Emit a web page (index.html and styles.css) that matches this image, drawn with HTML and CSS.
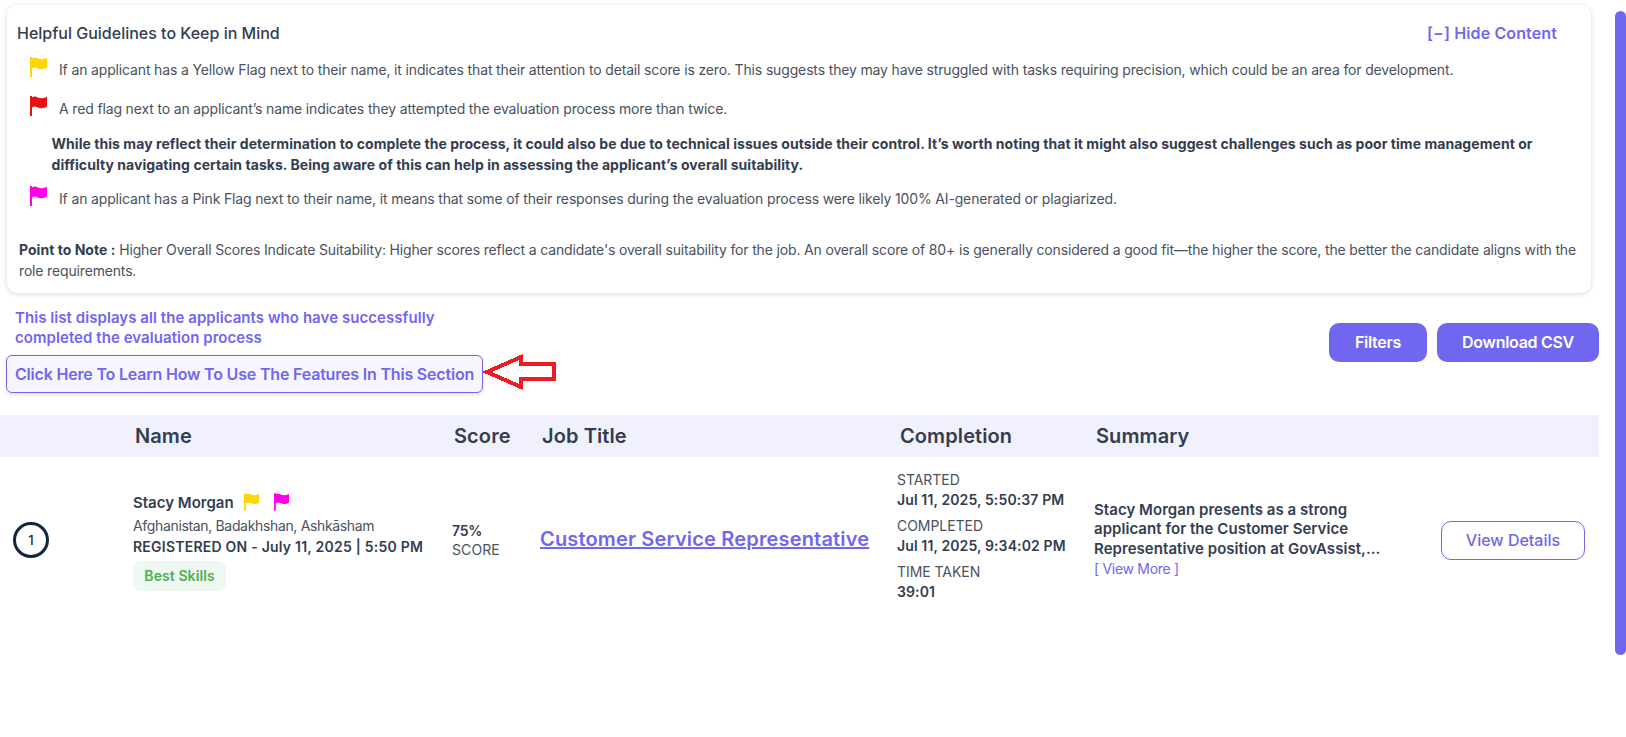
FILE: index.html
```html
<!DOCTYPE html>
<html lang="en">
<head>
<meta charset="utf-8">
<title>Applicants</title>
<link rel="stylesheet" href="styles.css">
</head>
<body>
<svg class="defs" width="0" height="0" aria-hidden="true">
  <symbol id="flag" viewBox="0 0 17 20">
    <path d="M0 0H2V1.2C4 .2 6 .6 8 1.6 10.500 2.800 13.500 2.400 17 .8V10.600C14 12.600 10.500 12.800 8 11.400 6 10.400 4 10.200 2 11.200V20H0Z"/>
  </symbol>
</svg>
<main class="page">
  <section class="card">
    <div class="card-head">
      <h2 class="card-title">Helpful Guidelines to Keep in Mind</h2>
      <a class="hide-link">[−] Hide Content</a>
    </div>
    <div class="flag-row flag-row-first">
      <svg class="flag flag-lg yellow"><use href="#flag"/></svg>
      <p>If an applicant has a Yellow Flag next to their name, it indicates that their attention to detail score is zero. This suggests they may have struggled with tasks requiring precision, which could be an area for development.</p>
    </div>
    <div class="flag-row">
      <svg class="flag flag-lg red"><use href="#flag"/></svg>
      <p>A red flag next to an applicant’s name indicates they attempted the evaluation process more than twice.</p>
    </div>
    <p class="bold-note">While this may reflect their determination to complete the process, it could also be due to technical issues outside their control. It’s worth noting that it might also suggest challenges such as poor time management or difficulty navigating certain tasks. Being aware of this can help in assessing the applicant’s overall suitability.</p>
    <div class="flag-row flag-row-last">
      <svg class="flag flag-lg pink"><use href="#flag"/></svg>
      <p>If an applicant has a Pink Flag next to their name, it means that some of their responses during the evaluation process were likely 100% AI-generated or plagiarized.</p>
    </div>
    <p class="note"><strong>Point to Note :</strong> Higher Overall Scores Indicate Suitability: Higher scores reflect a candidate's overall suitability for the job. An overall score of 80+ is generally considered a good fit—the higher the score, the better the candidate aligns with the role requirements.</p>
  </section>

  <section class="toolbar">
    <div class="intro">
      <p class="intro-text">This list displays all the applicants who have successfully completed the evaluation process</p>
      <div class="learn-row">
        <a class="learn-btn">Click Here To Learn How To Use The Features In This Section</a>
        <svg class="arrow" width="74" height="36" viewBox="0 0 74 36" shape-rendering="crispEdges"><path d="M4 18 38 3V10H71V25H38V33Z" fill="#fff" stroke="#ed1c24" stroke-width="4"/></svg>
      </div>
    </div>
    <div class="actions">
      <button class="btn btn-filters">Filters</button>
      <button class="btn btn-csv">Download CSV</button>
    </div>
  </section>

  <section class="table">
    <div class="thead">
      <span></span><span>Name</span><span>Score</span><span>Job Title</span><span>Completion</span><span>Summary</span><span></span>
    </div>
    <div class="trow">
      <div class="rank-cell"><span class="rank">1</span></div>
      <div class="person">
        <div class="person-name">Stacy Morgan
          <svg class="flag flag-sm flag-first yellow"><use href="#flag"/></svg>
          <svg class="flag flag-sm pink"><use href="#flag"/></svg>
        </div>
        <div class="person-loc">Afghanistan, Badakhshan, Ashkāsham</div>
        <div class="person-reg">REGISTERED ON - July 11, 2025 | 5:50 PM</div>
        <span class="chip">Best Skills</span>
      </div>
      <div class="score"><strong>75%</strong><span>SCORE</span></div>
      <div class="job-cell"><a class="job-link">Customer Service Representative</a></div>
      <div class="completion">
        <span>STARTED</span><strong>Jul 11, 2025, 5:50:37 PM</strong>
        <span>COMPLETED</span><strong>Jul 11, 2025, 9:34:02 PM</strong>
        <span>TIME TAKEN</span><strong>39:01</strong>
      </div>
      <div class="summary">
        <p>Stacy Morgan presents as a strong applicant for the Customer Service Representative position at GovAssist,...</p>
        <a class="view-more">[ View More ]</a>
      </div>
      <div class="detail-cell"><button class="btn-outline">View Details</button></div>
    </div>
  </section>
</main>
<div class="scroll-thumb"></div>
</body>
</html>
```

FILE: styles.css
```css
* { box-sizing: border-box; }
html, body { margin: 0; padding: 0; height: 100%; overflow: hidden; background: #fff; }
body { font-family: Inter, "Noto Sans", sans-serif; color: #333d50; }
p, h2 { margin: 0; }
.defs { position: absolute; }
.page { width: 1599px; padding-top: 5px; }

.card {
  margin-left: 7px; width: 1584px; height: 288px;
  padding: 17px 10px 0 10px;
  background: #fff; border-radius: 10px;
  box-shadow: 0 1px 5px rgba(30, 40, 60, .18);
}
.card-head { display: flex; justify-content: space-between; align-items: center; height: 22px; padding-right: 24px; }
.card-title { font-size: 16px; font-weight: 500; color: #333d50; letter-spacing: 0; }
.hide-link { font-size: 16px; font-weight: 600; color: #7166f0; letter-spacing: .12px; }

.flag-row { display: flex; align-items: center; gap: 12px; padding-left: 13px; height: 20px; margin-top: 19px; font-size: 14px; color: #4a5160; letter-spacing: -.15px; }
.flag-row p { padding-top: 4px; }
.flag-row-first { margin-top: 13px; }
.flag-row-last { margin-top: 11.500px; }
.flag { display: block; flex: none; }
.flag-lg { width: 17px; height: 20px; }
.flag-sm { display: inline-block; width: 15px; height: 18px; margin-left: 11px; vertical-align: -3px; }
.flag-first { margin-left: 7px; }
.yellow { fill: #ffd600; }
.red { fill: #e81010; }
.pink { fill: #ff00e6; }
.bold-note { margin: 16.500px 30px 0 34.5px; font-size: 14px; line-height: 21px; font-weight: 700; color: #333d50; letter-spacing: .05px; }
.note { margin: 32.500px 0 0 2px; font-size: 14px; line-height: 21px; color: #4a5160; letter-spacing: -.16px; }
.note strong { font-weight: 700; color: #333d50; letter-spacing: .03px; }

.toolbar { display: flex; justify-content: space-between; align-items: flex-start; margin-top: 15px; }
.intro { padding-left: 6px; }
.intro-text { width: 440px; padding-left: 9px; font-size: 15px; line-height: 20px; font-weight: 600; color: #7166f0; letter-spacing: .06px; }
.learn-row { display: flex; align-items: flex-start; margin-top: 7px; }
.learn-btn {
  display: block; height: 38px; width: 477px; padding-left: 8px; line-height: 36px;
  background: #f7f6ff; border: 1px solid #7166f0; border-radius: 6px;
  font-size: 16px; font-weight: 600; color: #7166f0; letter-spacing: -.19px; white-space: nowrap;
  box-shadow: 0 2px 4px rgba(60, 60, 120, .15);
}
.arrow { display: block; margin-top: -1px; }
.actions { display: flex; gap: 10px; margin-top: 15px; }
.btn { height: 39px; padding: 0 0 2px; border: 0; border-radius: 10px; background: #7166f0; color: #fff; font: 600 16px Inter, sans-serif; letter-spacing: -.3px; }
.btn-filters { width: 98px; }
.btn-csv { width: 162px; }

.table { margin-top: 22px; }
.thead, .trow { display: grid; grid-template-columns: 133px 319px 88px 358px 196px 296px 209px; }
.thead { height: 42px; align-items: center; background: #f1f1fd; font-size: 20px; font-weight: 600; color: #333d50; letter-spacing: .1px; }
.thead span { padding-left: 2px; }
.trow { height: 168px; align-items: center; }
.rank-cell { padding-left: 13px; margin-bottom: 2px; }
.rank { display: flex; align-items: center; justify-content: center; width: 36px; height: 36px; border: 3px solid #10263f; border-radius: 50%; font-size: 13px; font-weight: 500; color: #10263f; }
.person { font-size: 14px; }
.person-name { font-size: 15px; line-height: 22px; margin-bottom: 1px; font-weight: 600; letter-spacing: 0; }
.person-loc { line-height: 22px; color: #4a5160; letter-spacing: -.34px; }
.person-reg { line-height: 20px; font-weight: 600; letter-spacing: .23px; }
.chip { display: inline-block; margin-top: 4px; width: 93px; height: 30px; line-height: 30px; text-align: center; background: #eff8f0; border-radius: 8px; color: #4caf50; font-weight: 600; font-size: 14px; letter-spacing: .08px; }
.score { display: flex; flex-direction: column; margin-bottom: 2px; font-size: 14px; line-height: 19px; color: #4a5160; letter-spacing: .1px; }
.score strong { font-weight: 600; color: #333d50; letter-spacing: -.2px; }
.job-cell { margin-bottom: 4px; }
.job-link { font-size: 20px; font-weight: 600; color: #7166f0; text-decoration: underline; letter-spacing: .17px; white-space: nowrap; }
.completion { display: flex; flex-direction: column; margin: 0 0 10px -1px; font-size: 14px; line-height: 20px; color: #4a5160; letter-spacing: -.05px; }
.completion strong { margin-bottom: 6px; font-weight: 600; color: #333d50; letter-spacing: .12px; }
.completion strong:last-child { margin-bottom: 0; }
.summary { margin-bottom: 4px; font-size: 15px; line-height: 19.500px; font-weight: 600; letter-spacing: .05px; }
.view-more { display: block; margin-top: 1px; font-size: 14px; font-weight: 400; color: #7166f0; letter-spacing: -.3px; }
.detail-cell { padding-left: 51px; margin-bottom: 2px; }
.btn-outline { width: 144px; height: 39px; background: #fff; border: 1px solid #7166f0; border-radius: 10px; color: #7166f0; font: 500 16px Inter, sans-serif; }

.scroll-thumb { position: fixed; top: 11px; right: 0; width: 11px; height: 644px; background: #7166f0; border-radius: 6px; }
```
